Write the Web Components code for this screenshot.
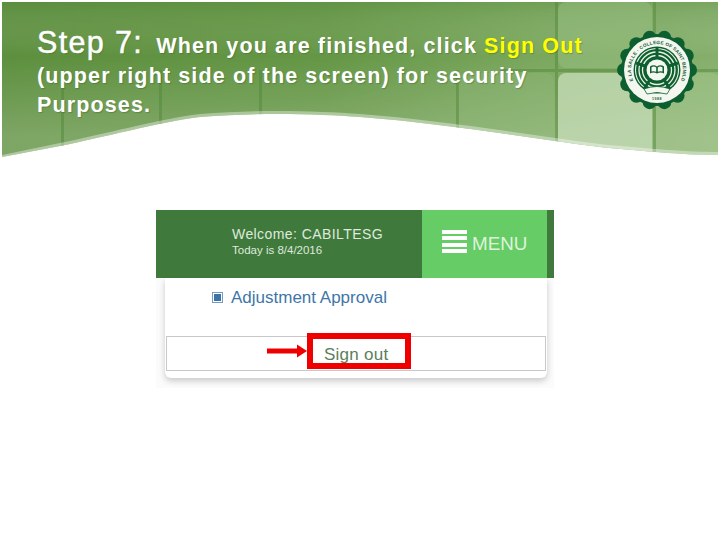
<!DOCTYPE html>
<html>
<head>
<meta charset="utf-8">
<style>
  html, body { margin: 0; background: #fff; }
  body { width: 720px; height: 540px; overflow: hidden; font-family: "Liberation Sans", Arial, sans-serif; }
  .hl { color: #ffff00; }
</style>
</head>
<body>
<slide-banner>
  <span slot="lead">Step 7:</span>
  When you are finished, click <span class="hl">Sign Out</span><br>
  (upper right side of the screen) for security<br>
  Purposes.
</slide-banner>
<portal-shot user="CABILTESG" date="8/4/2016"></portal-shot>

<script>
const bannerTemplate = document.createElement('template');
bannerTemplate.innerHTML = `
  <style>
    :host { display: block; position: relative; height: 158px; box-sizing: border-box; padding: 22px 0 0 37px; color: #fff; }
    .bg { position: absolute; left: 0; top: 0; }
    .text { position: relative; width: 570px; font-size: 21.5px; font-weight: 700; line-height: 29px; letter-spacing: 1.13px; text-shadow: 1px 1px 1px rgba(40,80,30,.3); }
    .lead { font-size: 30.5px; font-weight: 400; line-height: 40px; letter-spacing: 1.35px; margin-right: 6px; -webkit-text-stroke: 0.5px #fff; }
    site-seal { position: absolute; left: 616px; top: 29px; }
  </style>
  <svg class="bg" width="720" height="160" viewBox="0 0 720 160">
    <defs>
      <linearGradient id="g" x1="0" y1="0" x2="1" y2="0">
        <stop offset="0" stop-color="#5d8f3e"/>
        <stop offset=".45" stop-color="#659746"/>
        <stop offset=".75" stop-color="#7aa75d"/>
        <stop offset="1" stop-color="#86af6c"/>
      </linearGradient>
      <linearGradient id="v" x1="0" y1="0" x2="0" y2="1">
        <stop offset="0" stop-color="#4f8535" stop-opacity=".25"/>
        <stop offset=".35" stop-color="#fff" stop-opacity="0"/>
        <stop offset=".85" stop-color="#fff" stop-opacity=".2"/>
      </linearGradient>
      <clipPath id="c"><path d="M2 2H718V155C690 155 650 152 600 147C520 137 450 124 360 117C320 114 260 112 200 117C160 122 100 138 60 146L2 157Z"/></clipPath>
    </defs>
    <g clip-path="url(#c)">
      <rect width="720" height="160" fill="url(#g)"/>
      <rect width="720" height="160" fill="url(#v)"/>
      <rect x="558" y="2" width="94" height="66" rx="8" fill="#9cc085" opacity=".45"/>
      <rect x="558" y="73" width="94" height="90" rx="8" fill="#c3dab4" opacity=".8"/>
      <rect x="656" y="73" width="64" height="90" rx="8" fill="#a5c78f" opacity=".45"/>
      <rect x="458" y="73" width="96" height="90" rx="8" fill="#8fb878" opacity=".35"/>
      <g fill="#4f8535" opacity=".45">
        <rect x="61" y="70" width="3" height="90"/>
        <rect x="159" y="70" width="3" height="90"/>
        <rect x="259" y="70" width="3" height="90"/>
        <rect x="456" y="70" width="3" height="90"/>
        <rect x="555" y="2" width="3" height="160"/>
        <rect x="653" y="2" width="3" height="160"/>
        <rect x="500" y="69" width="220" height="3"/>
      </g>
      <path d="M2 155L60 143C100 135 160 119 200 114C260 109 320 111 360 114C450 121 520 134 600 144C650 149 690 152 718 152V158H2Z" fill="#fff" opacity=".38"/>
    </g>
  </svg>
  <div class="text"><span class="lead"><slot name="lead"></slot></span><slot></slot></div>
  <site-seal></site-seal>
`;

class SlideBanner extends HTMLElement {
  constructor() {
    super();
    this.root = this.attachShadow({ mode: 'open' });
    this.root.appendChild(bannerTemplate.content.cloneNode(true));
  }
}

const sealTemplate = document.createElement('template');
sealTemplate.innerHTML = `
  <style>
    :host { display: block; width: 82px; height: 82px; }
    svg { display: block; }
    text { font-family: "Liberation Sans", Arial, sans-serif; font-weight: 700; }
  </style>
  <svg width="82" height="82" viewBox="-41 -41 82 82">
    <defs>
      <path id="arc" d="M-24 10A26 26 0 1 1 24 10"/>
    </defs>
    <g class="scallops" fill="#0d5f30"></g>
    <circle r="36" fill="#0d5f30"/>
    <circle r="33" fill="#f3f7ef"/>
    <circle r="23.5" fill="#0d5f30"/>
    <text font-size="4.7" fill="#1a5c34" letter-spacing=".2"><textPath href="#arc" startOffset="50%" text-anchor="middle">DE LA SALLE · COLLEGE OF SAINT BENILDE</textPath></text>
    <text y="30" font-size="3.6" fill="#1a5c34" text-anchor="middle" letter-spacing=".5">1988</text>
    <g fill="none" stroke="#e8f1e2">
      <circle r="21.5" stroke-width="1.1"/>
      <circle r="18" stroke-width="1.3"/>
      <circle r="14.5" stroke-width="1.3"/>
    </g>
    <g stroke="#0d5f30" stroke-width="3" fill="none">
      <path d="M0 -23V-9M-21 -7L-9 -3M21 -7L9 -3M-13 19L-6 8M13 19L6 8"/>
    </g>
    <circle r="10.5" fill="#f3f7ef"/>
    <path d="M-7 -3.5Q-3.5 -6 0 -3.5Q3.5 -6 7 -3.5V3.5Q3.5 1.5 0 3.5Q-3.5 1.5 -7 3.5Z" fill="#0d5f30"/>
    <path d="M-5.5 -2.8Q-3 -4.2 -.8 -2.6V1.8Q-3 .6 -5.5 1.6ZM5.5 -2.8Q3 -4.2 .8 -2.6V1.8Q3 .6 5.5 1.6Z" fill="#f3f7ef"/>
    <path d="M-13 19Q0 14 13 19L10 24Q0 21 -10 24Z" fill="#f3f7ef" stroke="#0d5f30" stroke-width=".8"/>
  </svg>
`;

class SiteSeal extends HTMLElement {
  constructor() {
    super();
    this.root = this.attachShadow({ mode: 'open' });
    this.root.appendChild(sealTemplate.content.cloneNode(true));
    const scallops = this.root.querySelector('.scallops');
    for (let i = 0; i < 14; i++) {
      const a = (i / 14) * Math.PI * 2;
      const c = document.createElementNS('http://www.w3.org/2000/svg', 'circle');
      c.setAttribute('cx', (Math.cos(a) * 33).toFixed(2));
      c.setAttribute('cy', (Math.sin(a) * 33).toFixed(2));
      c.setAttribute('r', '7');
      scallops.appendChild(c);
    }
  }
}

const shotTemplate = document.createElement('template');
shotTemplate.innerHTML = `
  <style>
    :host { display: block; width: 398px; height: 178px; margin: 52px 0 0 156px; font-family: "Liberation Sans", Arial, sans-serif; background: #fbfbfb; }
    .bar { display: flex; height: 68px; background: #3f7a3c; color: #dfe9dc; }
    .welcome { flex: 1; padding: 16px 0 0 76px; font-size: 14px; line-height: 16px; letter-spacing: .42px; }
    .welcome small { display: block; font-size: 11.5px; line-height: 17px; letter-spacing: 0; }
    .menu { display: flex; align-items: center; gap: 5px; width: 125px; box-sizing: border-box; padding: 0 0 0 20px; margin-right: 7px; background: #66cc66; font-size: 18.8px; color: #dff3dc; }
    .menu i { display: block; width: 25px; height: 23px; margin-top: -5px; background: repeating-linear-gradient(#fff 0 4px, #66cc66 4px 6.4px); }
    .panel { width: 382px; height: 100px; margin-left: 9px; background: #fff; border-radius: 0 0 6px 6px; box-shadow: 0 3px 6px rgba(0,0,0,.2); display: flex; flex-direction: column; }
    .item { display: flex; align-items: center; gap: 8px; height: 39px; padding: 0 0 0 47px; margin-bottom: 19px; font-size: 17px; color: #3f76a8; }
    .item i { display: block; box-sizing: border-box; width: 11px; height: 11px; border: 1px solid #7a9cbc; background: #3a73a8; box-shadow: inset 0 0 0 1px #fff; }
    sign-row { margin-left: 1px; }
  </style>
  <div class="bar">
    <div class="welcome">Welcome: <span class="user"></span><small>Today is <span class="date"></span></small></div>
    <div class="menu"><i></i>MENU</div>
  </div>
  <div class="panel">
    <div class="item"><i></i>Adjustment Approval</div>
    <sign-row>Sign out</sign-row>
  </div>
`;

class PortalShot extends HTMLElement {
  static get observedAttributes() {
    return ['user', 'date'];
  }

  constructor() {
    super();
    this.root = this.attachShadow({ mode: 'open' });
    this.root.appendChild(shotTemplate.content.cloneNode(true));
  }

  attributeChangedCallback(attrName, oldValue, newValue) {
    this.root.querySelector('.' + attrName).textContent = newValue;
  }
}

const rowTemplate = document.createElement('template');
rowTemplate.innerHTML = `
  <style>
    :host { display: block; position: relative; width: 380px; height: 35px; box-sizing: border-box; border: 1px solid #c8c8c8; font-size: 17px; letter-spacing: .25px; color: #5a805a; }
    .label { display: block; padding: 8px 0 0 157px; line-height: 20px; }
    .box { position: absolute; left: 140px; top: -4px; width: 104px; height: 36px; box-sizing: border-box; border: 6px solid #ee0000; }
    svg { position: absolute; left: 100px; top: 7px; }
  </style>
  <span class="label"><slot></slot></span>
  <svg width="41" height="14" viewBox="0 0 41 14"><path d="M0 4.5H30V0.5L40 7L30 13.5V9.5H0Z" fill="#ee0000"/></svg>
  <div class="box"></div>
`;

class SignRow extends HTMLElement {
  constructor() {
    super();
    this.root = this.attachShadow({ mode: 'open' });
    this.root.appendChild(rowTemplate.content.cloneNode(true));
  }
}

customElements.define('site-seal', SiteSeal);
customElements.define('slide-banner', SlideBanner);
customElements.define('sign-row', SignRow);
customElements.define('portal-shot', PortalShot);
</script>
</body>
</html>
